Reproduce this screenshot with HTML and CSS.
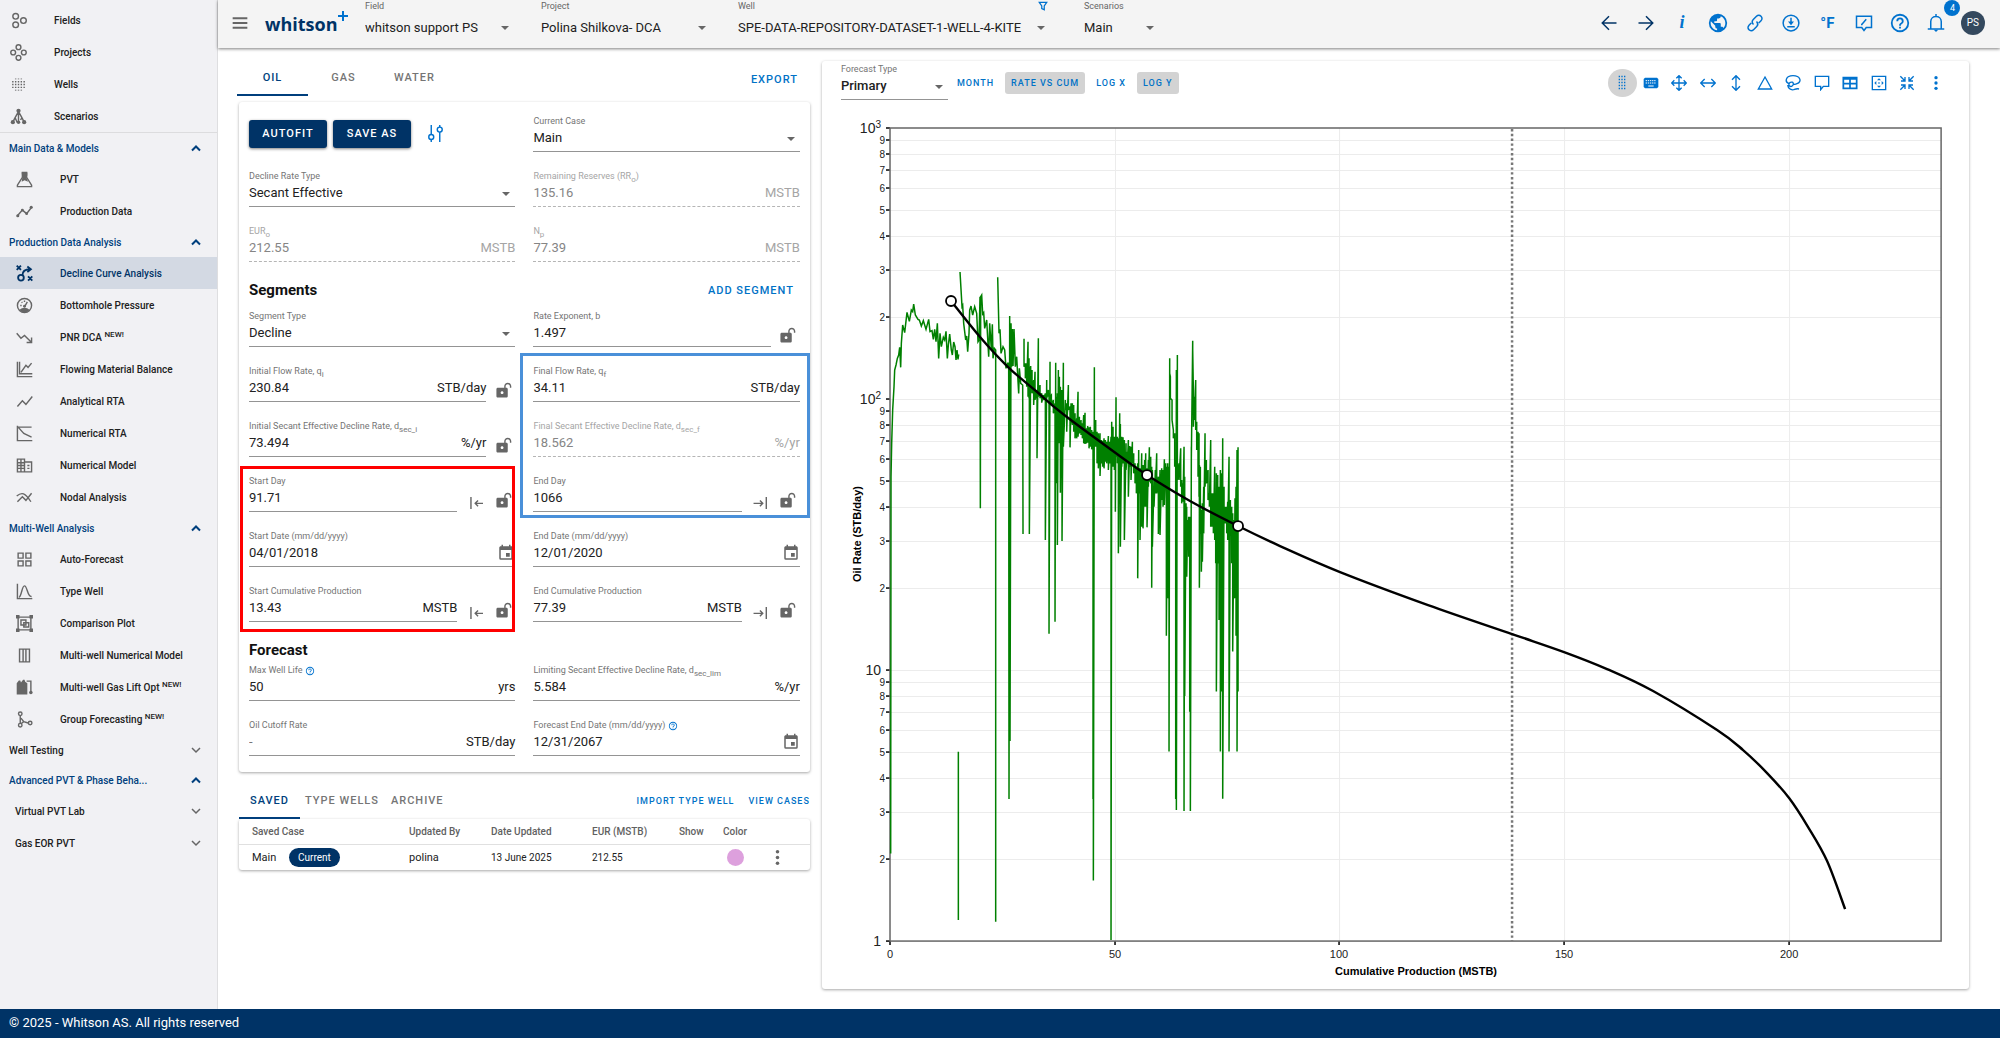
FILE: index.html
```html
<!DOCTYPE html>
<html lang="en">
<head>
    <meta charset="UTF-8">
    <meta name="viewport" content="width=device-width, initial-scale=1.0">
    <title>whitson+ Decline Curve Analysis</title>
    <link rel="stylesheet" href="styles.css">
</head>
<body>
    <!-- icons -->
    <svg class="sprite" aria-hidden="true">
        <symbol id="fields" viewBox="0 0 24 24"><g class="ln"><circle cx="8" cy="6" r="4"/><circle cx="8" cy="18" r="4"/><circle cx="19" cy="12" r="4"/></g></symbol>
        <symbol id="projects" viewBox="0 0 24 24"><g class="ln"><circle cx="12" cy="4.5" r="3.4"/><circle cx="12" cy="19.5" r="3.4"/><circle cx="4.5" cy="12" r="3.4"/><circle cx="19.5" cy="12" r="3.4"/></g></symbol>
        <symbol id="wells" viewBox="0 0 24 24"><g class="ln" stroke-dasharray="2 2"><path d="M3 8h18M3 12h18M3 16h18"/><path d="M7 20h10M7 4h10" opacity=".6"/></g></symbol>
        <symbol id="scenarios" viewBox="0 0 24 24"><path class="ln" d="M12 4v16M12 5l-5 9-3 6M12 5l5 9 3 6M7 13l3 7M17 13l-2 4"/><circle cx="12" cy="4" r="3"/><circle cx="4" cy="20" r="3"/><circle cx="12" cy="20" r="2.5"/><circle cx="20" cy="20" r="3"/></symbol>
        <symbol id="flask" viewBox="0 0 24 24"><path class="ln" d="M8 2h8M9 3v6L2 20v2h20v-2L15 9V3"/><path d="M8 2h8v4l-1 4 2 5-5-2-4 2 1-6z"/></symbol>
        <symbol id="line" viewBox="0 0 24 24"><path class="ln" d="M2 18l7-8 6 5 7-9"/><circle cx="2.5" cy="18" r="2.2"/><circle cx="9" cy="10" r="2"/><circle cx="15" cy="15" r="2"/><circle cx="21.5" cy="6" r="2.2"/></symbol>
        <symbol id="dca" viewBox="0 0 24 24"><g class="ln" stroke-width="2.6"><path d="M1 1l6 6M7 1L1 7M17 16l6 6M23 16l-6 6M9 15c0-7 4-9 11-9M16 2l5 4-5 4"/><circle cx="7" cy="18" r="4"/></g></symbol>
        <symbol id="gauge" viewBox="0 0 24 24"><circle class="ln" cx="12" cy="12" r="10"/><path d="M5 18c4-4 10-4 14 0-3 5-11 5-14 0z"/><path class="ln" d="M12 14l4-7M6 12h2M8 7l1 1M12 5v2"/><circle cx="12" cy="13" r="2"/></symbol>
        <symbol id="down" viewBox="0 0 24 24"><path class="ln" d="M1 6l6 7 5-4 9 9M15 19h7v-7"/></symbol>
        <symbol id="fmb" viewBox="0 0 24 24"><path class="ln" d="M2 1v21h21M5 1v17h18M7 16l7-10 3 3 5-6"/></symbol>
        <symbol id="arta" viewBox="0 0 24 24"><path class="ln" d="M2 19l7-8 5 5 9-11"/></symbol>
        <symbol id="nrta" viewBox="0 0 24 24"><path class="ln" d="M2 1v21h21M1 3h21M3 3l8 9 11 5"/></symbol>
        <symbol id="grid" viewBox="0 0 24 24"><path class="ln" d="M2 3h10v18H2zM12 7h10v14H12zM2 8h10M2 12h10M2 16h10M7 3v18M16 12h3M16 16h3"/></symbol>
        <symbol id="nodal" viewBox="0 0 24 24"><path class="ln" d="M2 18l7-7 5 5 8-10M1 10c7-6 12-5 20 8"/></symbol>
        <symbol id="four" viewBox="0 0 24 24"><path class="ln" d="M3 3h7v7H3zM14 3h7v7h-7zM3 14h7v7H3zM14 14h7v7h-7z"/></symbol>
        <symbol id="type" viewBox="0 0 24 24"><path class="ln" d="M2 1v21h21M4 20c4 0 4-16 8-16s4 16 10 15"/></symbol>
        <symbol id="compare" viewBox="0 0 24 24"><path class="ln" d="M3 3h18v18H3zM7 7h7v7H7zM11 11h7v6h-7z"/><path d="M0 0h5v5H0zM19 0h5v5h-5zM0 19h5v5H0zM19 19h5v5h-5z"/></symbol>
        <symbol id="cols" viewBox="0 0 24 24"><path class="ln" d="M5 3h14v18H5zM10 3v18M14 3v18"/></symbol>
        <symbol id="lift" viewBox="0 0 24 24"><path d="M1 6l3-4h2l1 3 3-4h2l1 3 3 2v16H1z"/><path class="ln" d="M15 3h6v16"/><circle cx="21" cy="19" r="2.5"/></symbol>
        <symbol id="group" viewBox="0 0 24 24"><g class="ln"><circle cx="6" cy="4" r="2.5"/><circle cx="6" cy="20" r="2.5"/><circle cx="20" cy="17" r="2.5"/><path d="M6 7v10M7 10l4 5 6 2M11 15l-4 3"/></g></symbol>
        <symbol id="up-chev" viewBox="0 0 24 24"><path class="ln" stroke-width="4" d="M4 17l8-8 8 8"/></symbol>
        <symbol id="down-chev" viewBox="0 0 24 24"><path class="ln" stroke-width="3" d="M4 8l8 8 8-8"/></symbol>
        <symbol id="menu" viewBox="0 0 24 24"><path class="ln" stroke-width="3" d="M1 5h22M1 12h22M1 19h22"/></symbol>
        <symbol id="filter" viewBox="0 0 24 24"><path class="ln" stroke-width="3" d="M3 3h18l-6 9v9l-6-3v-6z"/></symbol>
        <symbol id="back" viewBox="0 0 24 24"><path class="ln" d="M22 12H3M12 3l-9 9 9 9"/></symbol>
        <symbol id="forward" viewBox="0 0 24 24"><path class="ln" d="M2 12h19M12 3l9 9-9 9"/></symbol>
        <symbol id="earth" viewBox="0 0 24 24"><path d="M17.9,17.39C17.64,16.59 16.89,16 16,16H15V13A1,1 0 0,0 14,12H8V10H10A1,1 0 0,0 11,9V7H13A2,2 0 0,0 15,5V4.59C17.93,5.77 20,8.64 20,12C20,14.08 19.2,15.97 17.9,17.39M11,19.93C7.05,19.44 4,16.08 4,12C4,11.38 4.08,10.78 4.21,10.21L9,15V16A2,2 0 0,0 11,18M12,2A10,10 0 0,0 2,12A10,10 0 0,0 12,22A10,10 0 0,0 22,12A10,10 0 0,0 12,2Z"/></symbol>
        <symbol id="link" viewBox="0 0 24 24"><path class="ln" d="M10 14c-2-2-2-5 0-7l4-4c4-4 10 2 6 6l-3 3M14 10c2 2 2 5 0 7l-4 4c-4 4-10-2-6-6l3-3"/></symbol>
        <symbol id="download" viewBox="0 0 24 24"><circle class="ln" cx="12" cy="12" r="10.5"/><path d="M11 5h2v5h3l-4 5-4-5h3zM7 16h10v2H7z"/></symbol>
        <symbol id="feedback" viewBox="0 0 24 24"><path class="ln" d="M2 3h20v15h-7l-3 4-3-4H2zM9 14l6-7M8 14h2"/></symbol>
        <symbol id="help" viewBox="0 0 24 24"><path d="M11,18H13V16H11V18M12,2A10,10 0 0,0 2,12A10,10 0 0,0 12,22A10,10 0 0,0 22,12A10,10 0 0,0 12,2M12,20C7.59,20 4,16.41 4,12C4,7.59 7.59,4 12,4C16.41,4 20,7.59 20,12C20,16.41 16.41,20 12,20M12,6A4,4 0 0,0 8,10H10A2,2 0 0,1 12,8A2,2 0 0,1 14,10C14,12 11,11.75 11,15H13C13,12.75 16,12.5 16,10A4,4 0 0,0 12,6Z"/></symbol>
        <symbol id="bell" viewBox="0 0 24 24"><path class="ln" d="M1 20h22M5 20V10c0-9 14-9 14 0v10M12 3V0"/><path d="M9 21h6l-3 3z"/></symbol>
        <symbol id="lock" viewBox="0 0 24 24"><path d="M18 1C15.24 1 13 3.24 13 6V8H4C2.9 8 2 8.89 2 10V20C2 21.11 2.9 22 4 22H16C17.11 22 18 21.11 18 20V10C18 8.9 17.11 8 16 8H15V6C15 4.34 16.34 3 18 3S21 4.34 21 6V8H23V6C23 3.24 20.76 1 18 1M10 13C11.1 13 12 13.89 12 15C12 16.11 11.11 17 10 17C8.9 17 8 16.11 8 15C8 13.9 8.9 13 10 13Z"/></symbol>
        <symbol id="calendar" viewBox="0 0 24 24"><path d="M19,19H5V8H19M16,1V3H8V1H6V3H5C3.89,3 3,3.89 3,5V19A2,2 0 0,0 5,21H19A2,2 0 0,0 21,19V5C21,3.89 20.1,3 19,3H18V1M17,12H12V17H17V12Z"/></symbol>
        <symbol id="to-start" viewBox="0 0 24 24"><path class="ln" d="M7 7v17M24 16H13M17 12l-4 4 4 4"/></symbol>
        <symbol id="to-end" viewBox="0 0 24 24"><path class="ln" d="M23 7v17M5 16h13M14 12l4 4-4 4"/></symbol>
        <symbol id="tune" viewBox="0 0 24 24"><g class="ln"><path d="M6 0v13M6 21v3M18 10v14M18 0v3"/><circle cx="6" cy="17" r="3.5"/><circle cx="18" cy="6.5" r="3.5"/></g></symbol>
        <symbol id="drag" viewBox="0 0 24 24"><path class="ln" stroke-dasharray="2.5 2" d="M8 1v22M12 1v22M16 1v22"/></symbol>
        <symbol id="keyboard" viewBox="0 0 24 24"><path d="M3 4h18l2 2v12l-2 2H3l-2-2V6z"/><path stroke="#fff" stroke-width="1.5" stroke-dasharray="2 1.2" d="M4 8.5h16M4 12h16"/><path stroke="#fff" stroke-width="1.5" d="M8 16.5h8"/></symbol>
        <symbol id="move" viewBox="0 0 24 24"><path class="ln" d="M12 2v20M2 12h20M8 5l4-4 4 4M8 19l4 4 4-4M5 8l-4 4 4 4M19 8l4 4-4 4"/></symbol>
        <symbol id="horiz" viewBox="0 0 24 24"><path class="ln" d="M2 12h20M7 6l-6 6 6 6M17 6l6 6-6 6"/></symbol>
        <symbol id="vert" viewBox="0 0 24 24"><path class="ln" d="M12 2v20M6 7l6-6 6 6M6 17l6 6 6-6"/></symbol>
        <symbol id="triangle" viewBox="0 0 24 24"><path class="ln" d="M12 3l10 18H2z"/></symbol>
        <symbol id="lasso" viewBox="0 0 24 24"><path class="ln" d="M6 13C-1 10 1 1 12 1s14 9 6 12c-2 1-5 1-6 0M8 11c5-2 6 4 2 6-4 1-6-3-2-6M4 15c1 5 4 8 9 7 3-1 5-2 8-1"/></symbol>
        <symbol id="comment" viewBox="0 0 24 24"><path class="ln" d="M2 2h20v15h-8l-4 5v-5H2z"/></symbol>
        <symbol id="table" viewBox="0 0 24 24"><path class="ln" stroke-width="2.6" d="M2 4h20v16H2zM2 6h20M2 13h20M12 6v14"/></symbol>
        <symbol id="fit" viewBox="0 0 24 24"><path class="ln" d="M2 2h20v20H2z"/><path d="M12 5l3 3H9zM12 19l3-3H9zM5 12l3-3v6zM19 12l-3-3v6zM11 11h2v2h-2z"/></symbol>
        <symbol id="shrink" viewBox="0 0 24 24"><path class="ln" d="M2 2l7 7M22 2l-7 7M2 22l7-7M22 22l-7-7M3 9h6V3M21 9h-6V3M3 15h6v6M21 15h-6v6"/></symbol>
        <symbol id="dots" viewBox="0 0 24 24"><circle cx="12" cy="4" r="2.5"/><circle cx="12" cy="12" r="2.5"/><circle cx="12" cy="20" r="2.5"/></symbol>
    </svg>

    <div class="page">
        <nav class="sidebar">
            <div class="top">
                <a href="#"><svg><use href="#fields"/></svg>Fields</a>
                <a href="#"><svg><use href="#projects"/></svg>Projects</a>
                <a href="#"><svg><use href="#wells"/></svg>Wells</a>
                <a href="#"><svg><use href="#scenarios"/></svg>Scenarios</a>
            </div>
            <button class="group open">Main Data &amp; Models<svg><use href="#up-chev"/></svg></button>
            <a href="#"><svg><use href="#flask"/></svg>PVT</a>
            <a href="#"><svg><use href="#line"/></svg>Production Data</a>
            <button class="group open">Production Data Analysis<svg><use href="#up-chev"/></svg></button>
            <a href="#" class="active"><svg><use href="#dca"/></svg>Decline Curve Analysis</a>
            <a href="#"><svg><use href="#gauge"/></svg>Bottomhole Pressure</a>
            <a href="#"><svg><use href="#down"/></svg><span>PNR DCA <sup>NEW!</sup></span></a>
            <a href="#"><svg><use href="#fmb"/></svg>Flowing Material Balance</a>
            <a href="#"><svg><use href="#arta"/></svg>Analytical RTA</a>
            <a href="#"><svg><use href="#nrta"/></svg>Numerical RTA</a>
            <a href="#"><svg><use href="#grid"/></svg>Numerical Model</a>
            <a href="#"><svg><use href="#nodal"/></svg>Nodal Analysis</a>
            <button class="group open">Multi-Well Analysis<svg><use href="#up-chev"/></svg></button>
            <a href="#"><svg><use href="#four"/></svg>Auto-Forecast</a>
            <a href="#"><svg><use href="#type"/></svg>Type Well</a>
            <a href="#"><svg><use href="#compare"/></svg>Comparison Plot</a>
            <a href="#"><svg><use href="#cols"/></svg>Multi-well Numerical Model</a>
            <a href="#"><svg><use href="#lift"/></svg><span>Multi-well Gas Lift Opt <sup>NEW!</sup></span></a>
            <a href="#"><svg><use href="#group"/></svg><span>Group Forecasting <sup>NEW!</sup></span></a>
            <button class="group">Well Testing<svg><use href="#down-chev"/></svg></button>
            <button class="group open">Advanced PVT &amp; Phase Beha...<svg><use href="#up-chev"/></svg></button>
            <button class="group sub">Virtual PVT Lab<svg><use href="#down-chev"/></svg></button>
            <button class="group sub">Gas EOR PVT<svg><use href="#down-chev"/></svg></button>
        </nav>

        <div class="content">
            <header class="topbar">
                <button class="menu" aria-label="Menu"><svg><use href="#menu"/></svg></button>
                <div class="logo">whitson<svg viewBox="0 0 10 10"><path d="M4 0h2v4h4v2H6v4H4V6H0V4h4z"/></svg></div>
                <div class="pick pick-field">
                    <label for="field">Field</label>
                    <div class="arrow"><select id="field"><option>whitson support PS</option></select></div>
                </div>
                <div class="pick pick-project">
                    <label for="project">Project</label>
                    <div class="arrow"><select id="project"><option>Polina Shilkova- DCA</option></select></div>
                </div>
                <div class="pick pick-well">
                    <label for="well">Well</label>
                    <button class="filter" aria-label="Filter wells"><svg><use href="#filter"/></svg></button>
                    <div class="arrow"><select id="well"><option>SPE-DATA-REPOSITORY-DATASET-1-WELL-4-KITE</option></select></div>
                </div>
                <div class="pick pick-scenario">
                    <label for="scenario">Scenarios</label>
                    <div class="arrow"><select id="scenario"><option>Main</option></select></div>
                </div>
                <div class="tools">
                    <button class="navy" aria-label="Back"><svg><use href="#back"/></svg></button>
                    <button class="navy" aria-label="Forward"><svg><use href="#forward"/></svg></button>
                    <button class="info">i</button>
                    <button aria-label="Language"><svg class="big"><use href="#earth"/></svg></button>
                    <button aria-label="Copy link"><svg><use href="#link"/></svg></button>
                    <button aria-label="Download"><svg><use href="#download"/></svg></button>
                    <button class="unit-f">°F</button>
                    <button aria-label="Feedback"><svg><use href="#feedback"/></svg></button>
                    <button aria-label="Help"><svg class="big"><use href="#help"/></svg></button>
                    <button class="bell" aria-label="Notifications"><svg><use href="#bell"/></svg><span class="badge">4</span></button>
                    <button class="avatar">PS</button>
                </div>
            </header>

            <main>
                <section class="left">
                    <div class="tabs">
                        <button class="tab on">OIL</button>
                        <button class="tab">GAS</button>
                        <button class="tab">WATER</button>
                        <button class="text-btn export">EXPORT</button>
                    </div>

                    <form class="card form">
                        <div class="fields">
                            <div class="buttons">
                                <button type="button" class="btn">AUTOFIT</button>
                                <button type="button" class="btn">SAVE AS</button>
                                <button type="button" class="icon-btn blue" aria-label="Settings"><svg><use href="#tune"/></svg></button>
                            </div>
                            <div class="field">
                                <label for="case">Current Case</label>
                                <div class="control arrow"><select id="case"><option>Main</option></select></div>
                            </div>
                            <div class="field">
                                <label for="rate-type">Decline Rate Type</label>
                                <div class="control arrow"><select id="rate-type"><option>Secant Effective</option></select></div>
                            </div>
                            <div class="field off">
                                <label for="rr">Remaining Reserves (RR<sub>o</sub>)</label>
                                <div class="control"><input id="rr" value="135.16" disabled><span>MSTB</span></div>
                            </div>
                            <div class="field off">
                                <label for="eur">EUR<sub>o</sub></label>
                                <div class="control"><input id="eur" value="212.55" disabled><span>MSTB</span></div>
                            </div>
                            <div class="field off">
                                <label for="np">N<sub>p</sub></label>
                                <div class="control"><input id="np" value="77.39" disabled><span>MSTB</span></div>
                            </div>
                        </div>

                        <div class="head">
                            <h2>Segments</h2>
                            <button type="button" class="text-btn">ADD SEGMENT</button>
                        </div>
                        <div class="fields">
                            <div class="field">
                                <label for="seg-type">Segment Type</label>
                                <div class="control arrow"><select id="seg-type"><option>Decline</option></select></div>
                            </div>
                            <div class="locked">
                                <div class="field">
                                    <label for="b">Rate Exponent, b</label>
                                    <div class="control"><input id="b" value="1.497"></div>
                                </div>
                                <button type="button" class="icon-btn" aria-label="Lock"><svg><use href="#lock"/></svg></button>
                            </div>
                            <div class="locked">
                                <div class="field">
                                    <label for="qi">Initial Flow Rate, q<sub>i</sub></label>
                                    <div class="control"><input id="qi" value="230.84"><span>STB/day</span></div>
                                </div>
                                <button type="button" class="icon-btn" aria-label="Lock"><svg><use href="#lock"/></svg></button>
                            </div>
                            <div class="field">
                                <label for="qf">Final Flow Rate, q<sub>f</sub></label>
                                <div class="control"><input id="qf" value="34.11"><span>STB/day</span></div>
                            </div>
                            <div class="locked">
                                <div class="field">
                                    <label for="di">Initial Secant Effective Decline Rate, d<sub>sec_i</sub></label>
                                    <div class="control"><input id="di" value="73.494"><span>%/yr</span></div>
                                </div>
                                <button type="button" class="icon-btn" aria-label="Lock"><svg><use href="#lock"/></svg></button>
                            </div>
                            <div class="field off">
                                <label for="df">Final Secant Effective Decline Rate, d<sub>sec_f</sub></label>
                                <div class="control"><input id="df" value="18.562" disabled><span>%/yr</span></div>
                            </div>
                            <div class="locked">
                                <div class="field">
                                    <label for="start-day">Start Day</label>
                                    <div class="control"><input id="start-day" value="91.71"></div>
                                </div>
                                <button type="button" class="icon-btn" aria-label="To start"><svg><use href="#to-start"/></svg></button>
                                <button type="button" class="icon-btn" aria-label="Lock"><svg><use href="#lock"/></svg></button>
                            </div>
                            <div class="locked">
                                <div class="field">
                                    <label for="end-day">End Day</label>
                                    <div class="control"><input id="end-day" value="1066"></div>
                                </div>
                                <button type="button" class="icon-btn" aria-label="To end"><svg><use href="#to-end"/></svg></button>
                                <button type="button" class="icon-btn" aria-label="Lock"><svg><use href="#lock"/></svg></button>
                            </div>
                            <div class="field">
                                <label for="start-date">Start Date (mm/dd/yyyy)</label>
                                <div class="control"><input id="start-date" value="04/01/2018"><svg class="cal"><use href="#calendar"/></svg></div>
                            </div>
                            <div class="field">
                                <label for="end-date">End Date (mm/dd/yyyy)</label>
                                <div class="control"><input id="end-date" value="12/01/2020"><svg class="cal"><use href="#calendar"/></svg></div>
                            </div>
                            <div class="locked">
                                <div class="field">
                                    <label for="start-cum">Start Cumulative Production</label>
                                    <div class="control"><input id="start-cum" value="13.43"><span>MSTB</span></div>
                                </div>
                                <button type="button" class="icon-btn" aria-label="To start"><svg><use href="#to-start"/></svg></button>
                                <button type="button" class="icon-btn" aria-label="Lock"><svg><use href="#lock"/></svg></button>
                            </div>
                            <div class="locked">
                                <div class="field">
                                    <label for="end-cum">End Cumulative Production</label>
                                    <div class="control"><input id="end-cum" value="77.39"><span>MSTB</span></div>
                                </div>
                                <button type="button" class="icon-btn" aria-label="To end"><svg><use href="#to-end"/></svg></button>
                                <button type="button" class="icon-btn" aria-label="Lock"><svg><use href="#lock"/></svg></button>
                            </div>
                            <div class="mark red"></div>
                            <div class="mark sky"></div>
                        </div>

                        <div class="head forecast">
                            <h2>Forecast</h2>
                        </div>
                        <div class="fields">
                            <div class="field">
                                <label for="life">Max Well Life <svg><use href="#help"/></svg></label>
                                <div class="control"><input id="life" value="50"><span>yrs</span></div>
                            </div>
                            <div class="field">
                                <label for="dlim">Limiting Secant Effective Decline Rate, d<sub>sec_lim</sub></label>
                                <div class="control"><input id="dlim" value="5.584"><span>%/yr</span></div>
                            </div>
                            <div class="field">
                                <label for="cutoff">Oil Cutoff Rate</label>
                                <div class="control"><input id="cutoff" placeholder="-"><span>STB/day</span></div>
                            </div>
                            <div class="field">
                                <label for="fc-end">Forecast End Date (mm/dd/yyyy) <svg><use href="#help"/></svg></label>
                                <div class="control"><input id="fc-end" value="12/31/2067"><svg class="cal"><use href="#calendar"/></svg></div>
                            </div>
                        </div>
                    </form>

                    <div class="tabs lower">
                        <button class="tab on">SAVED</button>
                        <button class="tab">TYPE WELLS</button>
                        <button class="tab">ARCHIVE</button>
                        <button class="text-btn import">IMPORT TYPE WELL</button>
                        <button class="text-btn">VIEW CASES</button>
                    </div>
                    <table class="card cases">
                        <colgroup><col class="c1"><col class="c2"><col class="c3"><col class="c4"><col class="c5"><col class="c6"><col></colgroup>
                        <thead>
                            <tr><th>Saved Case</th><th>Updated By</th><th>Date Updated</th><th>EUR (MSTB)</th><th>Show</th><th>Color</th><th></th></tr>
                        </thead>
                        <tbody>
                            <tr>
                                <td class="name">Main <span class="chip">Current</span></td>
                                <td class="by">polina</td>
                                <td>13 June 2025</td>
                                <td>212.55</td>
                                <td></td>
                                <td><span class="swatch"></span></td>
                                <td><button class="icon-btn" aria-label="More"><svg><use href="#dots"/></svg></button></td>
                            </tr>
                        </tbody>
                    </table>
                </section>

                <section class="card plot">
                    <div class="plot-bar">
                        <div class="field">
                            <label for="fc-type">Forecast Type</label>
                            <div class="control arrow"><select id="fc-type"><option>Primary</option></select></div>
                        </div>
                        <div class="modes">
                            <button class="text-btn">MONTH</button>
                            <button class="text-btn sel">RATE VS CUM</button>
                            <button class="text-btn">LOG X</button>
                            <button class="text-btn sel">LOG Y</button>
                        </div>
                        <div class="plot-tools">
                            <button class="sel" aria-label="Drag"><svg><use href="#drag"/></svg></button>
                            <button aria-label="Keyboard"><svg><use href="#keyboard"/></svg></button>
                            <button aria-label="Move"><svg><use href="#move"/></svg></button>
                            <button aria-label="Horizontal"><svg><use href="#horiz"/></svg></button>
                            <button aria-label="Vertical"><svg><use href="#vert"/></svg></button>
                            <button aria-label="Triangle"><svg><use href="#triangle"/></svg></button>
                            <button aria-label="Lasso"><svg><use href="#lasso"/></svg></button>
                            <button aria-label="Comment"><svg><use href="#comment"/></svg></button>
                            <button aria-label="Table"><svg><use href="#table"/></svg></button>
                            <button aria-label="Fit"><svg><use href="#fit"/></svg></button>
                            <button aria-label="Shrink"><svg><use href="#shrink"/></svg></button>
                            <button aria-label="More"><svg><use href="#dots"/></svg></button>
                        </div>
                    </div>
                    <svg class="chart" viewBox="822 110 1147 879">
                        <g id="axes"></g>
                        <path id="rates" class="rates" transform="translate(840 110) scale(.33333)"/>
                        <path class="today" d="M1512 129V941"/>
                        <path id="curve" class="curve"/>
                        <circle class="knot" cx="951" cy="301" r="5"/>
                        <circle class="knot" cx="1147" cy="475" r="5"/>
                        <circle class="knot" cx="1238" cy="526" r="5"/>
                        <text class="title" x="1416" y="975" text-anchor="middle">Cumulative Production (MSTB)</text>
                        <text class="title" transform="translate(861 534) rotate(-90)" text-anchor="middle">Oil Rate (STB/day)</text>
                    </svg>
                </section>
            </main>
        </div>
    </div>
    <footer>© 2025 - Whitson AS. All rights reserved</footer>

    <script>
        const left = 890, right = 1941, top_ = 128, bottom = 941, decade = 271, perUnit = 4.493;

        // grid, ticks and axis labels
        let out = '';
        for (let d = 0; d < 3; d++) {
            for (let n = 1; n < 10; n++) {
                const y = Math.round(bottom - decade * (d + Math.log10(n)));
                if (d + n > 1) out += `<path class="gridline" d="M${left} ${y + .5}H${right}"/>`;
                out += `<path class="tick" d="M${left - 4} ${y}h4"/>`;
                if (n > 1) out += `<text class="minor" x="885" y="${y + 4}" text-anchor="end">${n}</text>`;
            }
        }
        for (let v = 0; v <= 200; v += 50) {
            const x = Math.round(left + v * perUnit);
            if (v > 0) out += `<path class="gridline" d="M${x + .5} ${top_}V${bottom}"/>`;
            out += `<path class="tick" d="M${x} ${bottom}v4"/>`;
            out += `<text class="xlabel" x="${x}" y="958" text-anchor="middle">${v}</text>`;
        }
        out += `<path class="tick" d="M${left - 4} ${top_}h4"/>`;
        out += `<rect class="frame" x="${left}" y="${top_}" width="${right - left}" height="${bottom - top_}"/>`;
        out += `<text class="major" x="881" y="133" text-anchor="end">10<tspan class="pow" dy="-5">3</tspan></text>`;
        out += `<text class="major" x="881" y="404" text-anchor="end">10<tspan class="pow" dy="-5">2</tspan></text>`;
        out += `<text class="major" x="881" y="675" text-anchor="end">10</text>`;
        out += `<text class="major" x="881" y="946" text-anchor="end">1</text>`;
        document.querySelector('#axes').innerHTML = out;

        // measured rates, first months
        let d = 'M152 2230L153 1100 155 1000 158 900 162 830 164 780 168 765 172 745 176 735 179 712 182 772 184 700 188 645 194 668 201 607 208 634 214 600 218 605 221 582 226 615 234 628 238 630 244 648 250 632 258 658 266 628 270 665 276 662 280 688 284 658 288 695 292 640 296 745 300 670 304 710 310 682 314 690 318 664 322 745 325 705 329 672 334 720 337 735 341 696 345 710 348 750 351 720 354 748 356 733';
        d += 'M355 1925V2430';
        d += 'M360 486L366 590 368 586 371 640 377 690 380 678 383 725 387 670 389 600 393 588 398 615 404 590 410 610 414 695 417 690 420 560 421 1195 422 560 425 555 428 612 431 608 434 655 440 630 446 740 449 640 454 720 457 643 459 745 463 715 467 720 467 2435';
        d += 'M473 502L477 670 480 658 483 730 489 710 494 720 498 775 503 760 506 760 507 2067 509 618 510 1893 513 640 515 770 517 657 519 768 522 657 526 770 530 740 536 850 538 775 542 820 548 825 549 1272';

        // later rates: [x, high, low] for each bar
        const bars = [
            [552,686,770],[556,760,805],[560,760,830],[564,695,860],[567,745,865],[568,770,1272],[572,768,840],[576,780,850],[581,810,885],[585,785,870],[589,840,865],
            [591,840,1045],[595,685,860],[600,825,865],[605,850,878],[610,855,870],[616,850,1290],[620,810,865],[625,840,860],[627,850,1571],[630,755,860],[634,855,885],
            [640,870,910],[645,880,1535],[647,758,900],[650,860,1120],[652,850,1305],[655,780,910],[658,800,1000],[661,830,1148],[664,840,1000],[666,840,1293],[670,758,1010],
            [676,870,900],[680,880,965],[685,825,900],[690,890,1012],[693,880,940],[697,880,945],[701,885,965],[705,910,985],[710,925,985],
            [714,845,980],[718,920,970],[723,930,975],[727,940,985],[731,915,1000],[735,908,1002],[739,955,1000],[743,948,998],[747,952,1015],[751,950,1010],
            [755,960,1018],[759,965,2067],[760,970,2311],[763,772,1010],[767,930,1010],[771,965,1060],[775,970,1075],[780,970,1098],[784,990,1060],[788,992,1070],
            [792,985,1075],[796,990,1055],[800,995,1060],[805,978,1080],[809,995,1060],[813,980,2490],[815,935,1050],[819,950,1070],[823,980,1080],[826,985,1205],[828,862,1040],
            [832,980,1060],[835,985,1330],[839,910,1060],[841,942,1310],[845,980,1070],[849,982,1060],[853,990,1290],[858,1000,1080],[862,1025,1060],[865,990,1160],
            [869,1008,1070],[873,1010,1110],[877,995,1060],[881,1030,1090],[885,1060,1120],[889,1070,1150],[893,1060,1405],[896,1020,1150],[900,1075,1290],[905,1030,1250],
            [909,1065,1255],[914,1050,1190],[917,1030,1190],[921,1075,1252],[925,1050,1130],[928,1012,1115],[932,1040,1120],[935,1070,1433],[937,1080,1310],[942,1110,1190],
            [946,1080,1150],[950,1030,1150],[955,1100,1272],[960,1080,1275],[965,1075,1170],[969,1080,1190],[973,1048,1185],[977,1060,1140],[979,1070,1577],[983,1060,1465],
            [987,1070,1924],[989,745,790],[991,800,865],[996,870,930],[1000,960,985],[1004,970,1070],[1007,1050,2067],[1009,780,2100],[1012,735,1110],[1017,1060,1110],
            [1022,1015,1130],[1025,1110,1180],[1029,1120,1175],[1032,1010,2103],[1034,1100,1758],[1038,1180,1330],[1040,1190,1400],[1043,1230,1320],[1046,1220,1340],
            [1049,1220,1805],[1051,1220,2103],[1054,1010,1040],[1058,692,720],[1060,840,950],[1063,860,930],[1067,810,960],[1070,935,1020],[1074,965,1100],[1077,970,1160],
            [1078,1065,1433],[1081,1070,1270],[1084,1200,1385],[1087,1180,1355],[1091,1130,1270],[1095,970,1130],[1099,1050,1120],[1104,1080,1170],[1108,1150,1190],[1112,990,1250],
            [1116,1150,1250],[1120,1150,1270],[1124,1070,1290],[1127,1150,1360],[1129,1090,1744],[1133,1095,1360],[1137,1130,1530],[1141,1080,1924],[1143,1090,1535],
            [1145,1110,1744],[1148,985,2066],[1152,1130,1230],[1156,1190,1240],[1160,1190,1270],[1163,1175,1290],[1167,1040,1924],[1171,1170,1250],[1175,1190,1360],
            [1178,1210,1624],[1182,1230,1465],[1185,1165,1465],[1188,1130,1577],[1191,1020,1924],[1194,1012,1744]
        ];
        bars.forEach((b, i) => { d += `${i ? 'L' : 'M'}${b[0]} ${b[1]}V${b[2]}`; });
        document.querySelector('#rates').setAttribute('d', d);

        // decline curve through its points
        const pts = [[951,301],[980,337],[1008,367],[1036,391],[1063,414],[1117,454],[1147,475],[1190,501],[1238,526],[1280,546],[1340,572],[1428,605],[1512,634],[1564,652],
            [1607,669],[1653,691],[1717,730],[1743,750],[1767,773],[1789,798],[1808,827],[1827,861],[1845,909]];
        let c = `M${pts[0]}`;
        for (let i = 0; i < pts.length - 1; i++) {
            const p0 = pts[i - 1] || pts[i], p1 = pts[i], p2 = pts[i + 1], p3 = pts[i + 2] || p2;
            c += `C${p1[0] + (p2[0] - p0[0]) / 6} ${p1[1] + (p2[1] - p0[1]) / 6} ${p2[0] - (p3[0] - p1[0]) / 6} ${p2[1] - (p3[1] - p1[1]) / 6} ${p2}`;
        }
        document.querySelector('#curve').setAttribute('d', c);
    </script>
</body>
</html>
```
FILE: styles.css
```css
* {
    margin: 0;
    padding: 0;
    box-sizing: border-box;
}
body {
    min-height: 100vh;
    display: flex;
    flex-direction: column;
    font-family: Roboto, "Liberation Sans", sans-serif;
    font-size: 13px;
    color: #212121;
    background: #fff;
}
button, input, select {
    font: inherit;
    color: inherit;
    border: none;
    background: none;
    outline: none;
}
button {
    cursor: pointer;
}
svg {
    fill: currentColor;
    stroke-width: 2;
}
.sprite {
    position: absolute;
    width: 0;
    height: 0;
}
.ln {
    fill: none;
    stroke: currentColor;
}
.page {
    flex: 1;
    display: flex;
}

/* sidebar */
.sidebar {
    width: 218px;
    flex-shrink: 0;
    background: #f1f1f4;
    border-right: 1px solid #dedee0;
    font-size: 10px;
    font-weight: 500;
}
.sidebar .top {
    padding-top: 4px;
    border-bottom: 1px solid #dcdcde;
}
.sidebar a {
    display: flex;
    align-items: center;
    height: 32px;
    padding-left: 16px;
    gap: 27px;
    color: #212121;
    text-decoration: none;
}
.sidebar .top a {
    padding-left: 10px;
}
.sidebar svg {
    width: 17px;
    height: 17px;
    color: #666;
}
.sidebar sup {
    font-size: 8px;
    line-height: 8px;
}
.sidebar .active, .sidebar .active svg {
    background: #d3d9e3;
    color: #003366;
}
.group {
    display: flex;
    align-items: center;
    justify-content: space-between;
    width: 100%;
    height: 30px;
    padding: 0 15px 0 9px;
}
.group.sub {
    height: 32px;
    padding-left: 15px;
}
.sidebar .group svg {
    width: 12px;
    height: 12px;
}
.sidebar .group.open, .sidebar .group.open svg {
    color: #003f7d;
}

/* top bar */
.content {
    flex: 1;
    min-width: 0;
}
.topbar {
    display: flex;
    height: 48px;
    padding: 0 9px 0 14px;
    background: #f4f4f4;
    box-shadow: 0 1px 3px rgba(0, 0, 0, .5);
}
.menu {
    width: 16px;
    height: 46px;
    color: #666;
}
.menu svg {
    width: 16px;
    height: 16px;
    vertical-align: middle;
}
.logo {
    display: flex;
    width: 100px;
    margin: 0 0 0 17px;
    font: 700 18px/48px "Open Sans", sans-serif;
    color: #003366;
}
.logo svg {
    width: 10px;
    height: 10px;
    margin: 11px 0 0 1px;
    color: #0072ce;
}
.pick {
    position: relative;
}
.pick label {
    display: block;
    font-size: 9px;
    line-height: 13px;
    color: #666;
}
.pick .arrow {
    height: 29px;
}
.pick .arrow::after {
    right: 3px;
}
.pick-field {
    width: 147px;
    margin-right: 29px;
}
.pick-project {
    width: 168px;
    margin-right: 29px;
}
.pick-well {
    width: 310px;
    margin-right: 36px;
}
.pick-scenario {
    width: 73px;
}
.filter {
    position: absolute;
    right: 0;
    top: 0;
    color: #0072ce;
}
.filter svg {
    width: 10px;
    height: 12px;
}
.arrow {
    position: relative;
    display: flex;
    align-items: center;
}
.arrow::after {
    content: "";
    position: absolute;
    right: 5px;
    top: calc(50% - 2px);
    border: 4px solid transparent;
    border-top-color: #666;
    border-bottom: none;
    pointer-events: none;
}
select {
    width: 100%;
    appearance: none;
}
.tools {
    display: grid;
    grid-template-columns: repeat(11, 1fr);
    width: 400px;
    height: 45px;
    margin-left: auto;
    align-items: center;
    justify-items: center;
    color: #0072ce;
}
.tools svg {
    display: block;
    width: 18px;
    height: 18px;
}
.tools svg.big {
    width: 22px;
    height: 22px;
}
.tools .navy {
    color: #003366;
}
.info {
    font: italic 700 18px "Liberation Serif", serif;
}
.unit-f {
    font-size: 15px;
    font-weight: 700;
}
.bell {
    position: relative;
}
.badge {
    position: absolute;
    left: 17px;
    top: -14px;
    width: 16px;
    height: 16px;
    border-radius: 50%;
    background: #0072ce;
    color: #fff;
    font-size: 9px;
    line-height: 16px;
}
.avatar {
    width: 24px;
    height: 24px;
    border-radius: 50%;
    background: #34495e;
    color: #fff;
    font-size: 10px;
}

/* page body */
main {
    display: grid;
    grid-template-columns: 33% minmax(0, 1fr);
    gap: 12px;
    padding: 13px 31px 20px 21px;
}
.card {
    background: #fff;
    border-radius: 3px;
    box-shadow: 0 1px 3px rgba(0, 0, 0, .35);
}
.tabs {
    display: flex;
    height: 35px;
    margin: 0 0 6px -2px;
    font-size: 11px;
}
.tab {
    width: 71px;
    border-bottom: 2px solid transparent;
    color: #757575;
    font-size: 11px;
    font-weight: 500;
    letter-spacing: 1px;
}
.tab.on {
    color: #003f7d;
    border-color: #003f7d;
}
.text-btn {
    height: 22px;
    color: #0072c6;
    font-size: 11px;
    font-weight: 500;
    letter-spacing: 1px;
}
.export {
    margin: 7px 12px 0 auto;
}
.form {
    padding: 13px 10px 16px;
}
.fields {
    position: relative;
    display: grid;
    grid-template-columns: minmax(0, 1fr) minmax(0, 1fr);
    gap: 18px;
}
.buttons {
    display: flex;
    align-items: center;
    gap: 6px;
}
.btn {
    width: 78px;
    height: 28px;
    border-radius: 3px;
    background: #003366;
    color: #fff;
    font-size: 11px;
    font-weight: 500;
    letter-spacing: 1px;
    box-shadow: 0 1px 3px rgba(0, 0, 0, .5);
}
.icon-btn {
    width: 24px;
    height: 24px;
    color: #666;
}
.icon-btn svg {
    display: block;
    width: 17px;
    height: 17px;
    margin: auto;
}
.blue {
    margin-left: 6px;
    color: #0072ce;
}
.field {
    flex: 1;
    min-width: 0;
}
.field label {
    display: block;
    height: 12px;
    font-size: 9px;
    line-height: 12px;
    color: #757575;
    white-space: nowrap;
}
.field label svg {
    width: 10px;
    height: 10px;
    vertical-align: -3px;
    color: #0072ce;
}
sub {
    font-size: 8px;
    line-height: 8px;
    vertical-align: -3px;
}
.control {
    display: flex;
    align-items: center;
    height: 25px;
    padding-bottom: 3px;
    border-bottom: 1px solid #949494;
}
.control input {
    flex: 1;
    min-width: 0;
    width: 0;
}
.cal {
    width: 18px;
    height: 18px;
    color: #666;
}
.off label, .off .control span {
    color: #a5a5a5;
}
.off .control {
    border-bottom: 1px dashed #b5b5b5;
}
.off input {
    color: #858585;
}
.locked {
    display: flex;
    align-items: flex-end;
    gap: 5px;
}
.head {
    display: flex;
    align-items: center;
    justify-content: space-between;
    height: 28px;
    margin: 14px 0 6px;
    padding-right: 6px;
}
h2 {
    font-size: 15px;
    font-weight: 700;
    color: #111;
}
.forecast {
    height: 20px;
    margin: 18px 0 4px;
}

/* highlight boxes over groups of fields */
.mark {
    position: absolute;
    pointer-events: none;
}
.red {
    grid-area: 4 / 1 / 7 / 2;
    inset: -9px 0 -10px -9px;
    border: 3px solid #f00;
}
.sky {
    grid-area: 2 / 2 / 5 / 3;
    inset: -12px -10px -6px -13px;
    border: 3px solid #4a90d9;
}

.lower {
    height: 36px;
    margin: 11px 0 0;
}
.lower .tab {
    width: auto;
    margin-right: 2px;
    padding: 0 5px;
}
.lower .tab.on {
    padding: 0 11px;
    margin-right: 0;
}
.lower .text-btn {
    font-size: 9px;
    margin-top: 7px;
}
.lower .import {
    margin: 7px 14px 0 auto;
}
.cases {
    width: 100%;
    table-layout: fixed;
    border-collapse: collapse;
    font-size: 10px;
}
.cases th {
    height: 25px;
    padding-left: 13px;
    border-bottom: 1px solid #e0e0e0;
    color: #616161;
    font-weight: 500;
    text-align: left;
}
.cases td {
    height: 26px;
    padding-left: 13px;
}
.cases .name, .cases .by {
    font-size: 11px;
}
.c1 { width: 157px; }
.c2 { width: 82px; }
.c3 { width: 101px; }
.c4 { width: 87px; }
.c5 { width: 44px; }
.c6 { width: 42px; }
.cases .icon-btn, .swatch {
    display: block;
}
.chip {
    display: inline-block;
    margin-left: 10px;
    padding: 0 9px;
    border-radius: 10px;
    background: #003366;
    color: #fff;
    font-size: 10px;
    line-height: 19px;
}
.swatch {
    width: 17px;
    height: 17px;
    margin-left: 4px;
    border-radius: 50%;
    background: #dda0dd;
}

/* plot */
.plot-bar {
    display: flex;
    height: 49px;
    padding: 2px 19px 0;
}
.plot-bar .field {
    flex: none;
    width: 107px;
}
.plot-bar select {
    font-weight: 500;
}
.modes {
    display: flex;
    gap: 5px;
    margin: 9px 0 0 3px;
}
.modes .text-btn {
    padding: 0 6px;
    border-radius: 3px;
    font-size: 9px;
}
.modes .sel {
    background: #d3d3d3;
}
.plot-tools {
    display: grid;
    grid-template-columns: repeat(12, 1fr);
    width: 342px;
    height: 28px;
    margin: 6px 0 0 auto;
    color: #0072ce;
}
.plot-tools .sel {
    border-radius: 50%;
    background: #d3d3d3;
}
.plot-tools svg {
    display: block;
    width: 16px;
    height: 16px;
    margin: auto;
}
.chart {
    display: block;
    width: 100%;
    font-family: "Liberation Sans", Arial, sans-serif;
    fill: #222;
}
.chart path, .frame {
    fill: none;
}
.gridline {
    stroke: #ececec;
    stroke-width: 1;
}
.frame {
    stroke: #666;
    stroke-width: 1.5;
}
.tick {
    stroke: #000;
    stroke-width: 1.5;
}
.minor {
    font-size: 10px;
}
.major {
    font-size: 14px;
}
.pow {
    font-size: 10px;
}
.xlabel {
    font-size: 11px;
}
.title {
    font-size: 11px;
    font-weight: 700;
    fill: #000;
}
.rates {
    stroke: green;
    stroke-width: 4.5;
}
.today {
    stroke: #777;
    stroke-width: 2.5;
    stroke-dasharray: 2.4 2.4;
}
.curve {
    stroke: #000;
    stroke-width: 2.4;
}
.knot {
    fill: #fff;
    stroke: #000;
    stroke-width: 1.8;
}

footer {
    height: 29px;
    margin-bottom: 1px;
    padding-left: 9px;
    background: #003366;
    color: #fff;
    line-height: 28px;
}
```
